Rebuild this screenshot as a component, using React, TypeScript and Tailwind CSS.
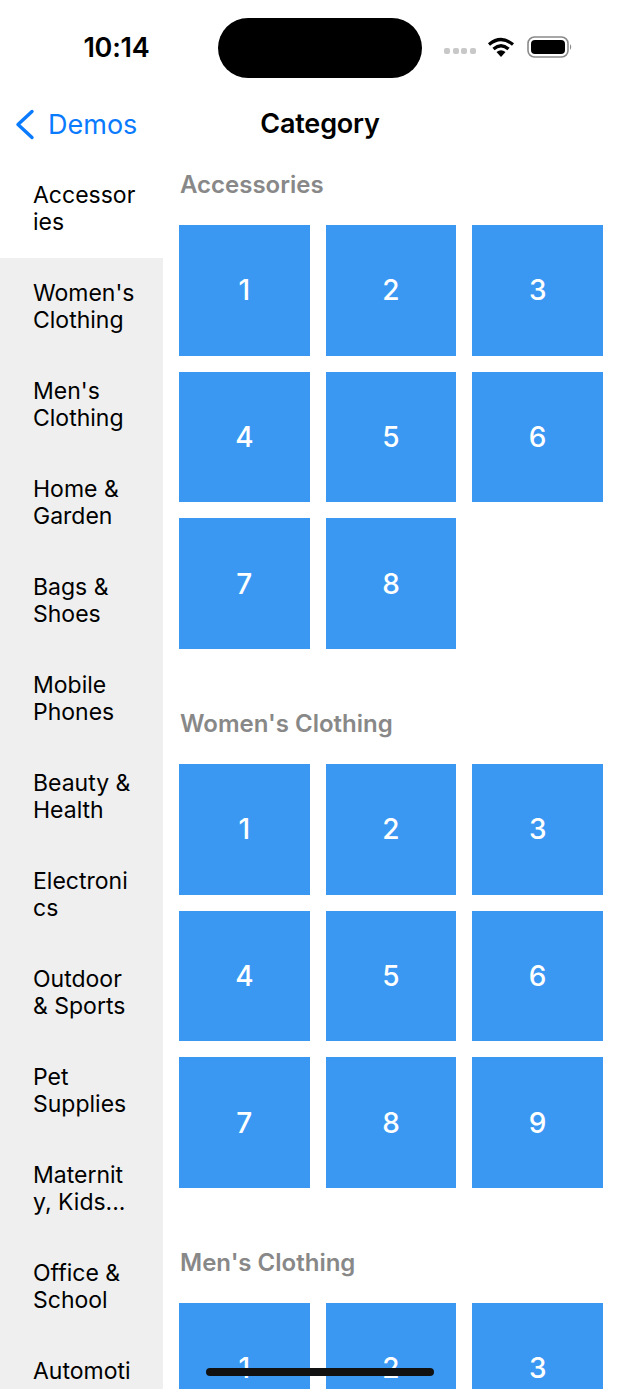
import React from "react";

const cats = [
  ["Accessor", "ies"], ["Women's", "Clothing"], ["Men's", "Clothing"], ["Home &", "Garden"], ["Bags &", "Shoes"],
  ["Mobile", "Phones"], ["Beauty &", "Health"], ["Electroni", "cs"], ["Outdoor", "& Sports"], ["Pet", "Supplies"],
  ["Maternit", "y, Kids..."], ["Office &", "School"], ["Automoti", "ve"],
];

const sections = [
  { title: "Accessories", count: 8 },
  { title: "Women's Clothing", count: 9 },
  { title: "Men's Clothing", count: 3 },
];

export default function App() {
  return (
    <div className="relative h-[1389px] w-[640px] overflow-hidden bg-white font-['Inter','Liberation_Sans',sans-serif] text-black">
      <div className="flex h-[94px] items-start">
        <div className="flex w-[233px] justify-center pl-[0px] pt-[31px]">
          <span className="text-[27px] font-semibold leading-[34px] tracking-[-0.2px]">10:14</span>
        </div>
        <div className="mt-[18px] h-[60px] w-[204px] -translate-x-[15px] rounded-full bg-black" />
        <div className="ml-[22px] mt-[36px] flex items-center -translate-x-[15px]">
          <div className="mt-[7px] flex gap-[2.5px]">
            {[0, 1, 2, 3].map((i) => (
              <span key={i} className="h-[6px] w-[6px] rounded-[2px] bg-[#c8c8c8]" />
            ))}
          </div>
          <svg width="28" height="20" viewBox="0 0 28 20" className="ml-[11px]">
            <path d="M14 20 L9.5 15 Q14 11.5 18.5 15 Z" fill="#000" />
            <path d="M6.5 12 Q14 5.5 21.5 12" fill="none" stroke="#000" strokeWidth="3.2" />
            <path d="M2 7.5 Q14 -2.5 26 7.5" fill="none" stroke="#000" strokeWidth="3.2" />
          </svg>
          <svg width="46" height="22" viewBox="0 0 46 22" className="ml-[12px]">
            <rect x="1" y="1" width="40" height="20" rx="6.5" fill="none" stroke="#8a8a8a" strokeWidth="1.6" />
            <rect x="4" y="4" width="34" height="14" rx="4" fill="#000" />
            <path d="M43 8 Q45.5 11 43 14 Z" fill="#8a8a8a" />
          </svg>
        </div>
      </div>

      <div className="relative flex h-[66px] items-center justify-center pb-[6px]">
        <div className="absolute left-[15px] top-[15px] flex items-center">
          <svg width="20" height="32" viewBox="0 0 20 32" fill="none">
            <path d="M17 2.5 L3 15.5 L17 28.5" stroke="#0a7aff" strokeWidth="3.4" strokeLinecap="round" strokeLinejoin="round" />
          </svg>
          <span className="ml-[13px] text-[27px] leading-[32px] text-[#0a7aff]">Demos</span>
        </div>
        <span className="text-[27px] font-semibold leading-[32px] tracking-[-0.2px]">Category</span>
      </div>

      <div className="flex">
        <div className="w-[163px] shrink-0">
          {cats.map((c, i) => (
            <div
              key={c[0]}
              className={`flex h-[98px] flex-col justify-center pl-[33px] text-[23px] leading-[27px] ${i === 0 ? "bg-white" : "bg-[#efefef]"}`}
            >
              <span className="whitespace-nowrap">{c[0]}</span>
              <span className="whitespace-nowrap">{c[1]}</span>
            </div>
          ))}
        </div>
        <div className="w-[440px] pl-[16px] pt-[7px]">
          {sections.map((s) => (
            <div key={s.title} className="mb-[57px]">
              <div className="mb-[23px] h-[35px] pl-[1px] text-[24px] font-semibold leading-[35px] text-[#888888]">{s.title}</div>
              <div className="grid grid-cols-3 gap-[16px]">
                {Array.from({ length: s.count }, (_, n) => (
                  <div
                    key={n}
                    className="flex h-[130.67px] items-center justify-center bg-[#3a98f3] text-[28px] font-medium text-white"
                  >
                    {n + 1}
                  </div>
                ))}
              </div>
            </div>
          ))}
        </div>
      </div>

      <div className="absolute bottom-[13px] left-[206px] h-[8px] w-[228px] rounded-full bg-[#111111]" />
    </div>
  );
}
